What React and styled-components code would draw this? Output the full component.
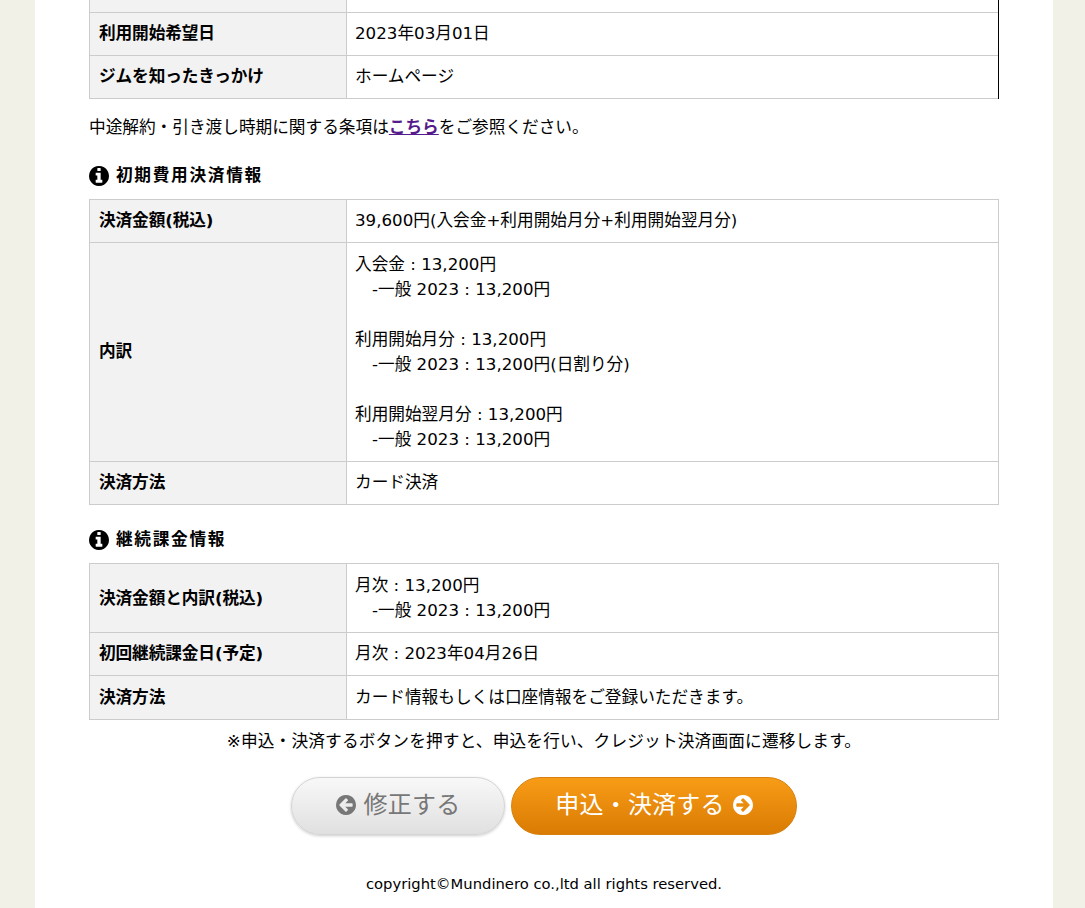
import styled, { createGlobalStyle } from "styled-components";

const GlobalStyle = createGlobalStyle`
  html, body {
    margin: 0;
    padding: 0;
    height: 908px;
    overflow: hidden;
    background: #f1f1e8;
  }
  body {
    font-family: "DejaVu Sans", "Noto Sans CJK JP", sans-serif;
    font-size: 16.67px;
    color: #000;
  }
`;

const Page = styled.div`
  box-sizing: border-box;
  width: 1018px;
  height: 908px;
  margin-left: 35px;
  padding: 0 54px;
  background: #fff;
  overflow: hidden;
`;

const DarkEdge = styled.div`
  position: relative;
  &::after {
    content: "";
    position: absolute;
    top: 0;
    right: 0;
    bottom: 0;
    width: 1px;
    background: #000;
  }
`;

const Table = styled.table`
  width: 910px;
  table-layout: fixed;
  border-collapse: collapse;
  line-height: 25px;
`;

const Th = styled.th`
  width: 257px;
  box-sizing: border-box;
  padding: 8.6px 9px 8.8px;
  background: #f2f2f2;
  border: 1px solid #ccc;
  border-top: ${(p) => (p.$clipped ? "none" : "1px solid #ccc")};
  text-align: left;
  font-weight: 700;
  letter-spacing: -0.1px;
`;

const Td = styled.td`
  padding: 8.6px 9px 8.8px 8px;
  border: 1px solid #ccc;
  border-top: ${(p) => (p.$clipped ? "none" : "1px solid #ccc")};
`;

const ClippedRow = styled.tr`
  height: 12px;
  th, td {
    padding: 0;
  }
`;

const Indent = styled.span`
  padding-left: 17px;
`;

const Notice = styled.p`
  margin: 16px 0 0;
  line-height: 25px;
`;

const TermsLink = styled.a`
  color: #551a8b;
  font-weight: 700;
  text-decoration: underline;
`;

const Heading = styled.h3`
  display: flex;
  align-items: center;
  gap: 7px;
  margin: 22.5px 0 10px;
  font-size: 16.67px;
  line-height: 26px;
  font-weight: 700;
  letter-spacing: 1.7px;
`;

const Glyph = styled.svg`
  flex: none;
  width: ${(p) => p.$size}px;
  height: ${(p) => p.$size}px;
  fill: currentColor;
  transform: ${(p) => (p.$flip ? "scaleX(-1)" : "none")};
`;

const Caution = styled.p`
  margin: 9px 0 0;
  line-height: 25px;
  text-align: center;
  letter-spacing: 0.17px;
`;

const Buttons = styled.div`
  display: flex;
  justify-content: center;
  gap: 6px;
  margin-top: 23px;
`;

const Button = styled.a`
  box-sizing: border-box;
  display: flex;
  align-items: center;
  justify-content: center;
  gap: 8px;
  width: ${(p) => p.$width}px;
  height: 58px;
  padding-bottom: 6px;
  border-radius: 29px;
  font-size: 24px;
  letter-spacing: 0.2px;
  color: ${(p) => (p.$primary ? "#fff" : "#777")};
  border: 1px solid ${(p) => (p.$primary ? "#d6810f" : "#d4d4d4")};
  background: ${(p) =>
    p.$primary
      ? "linear-gradient(#f89c17, #da7b03)"
      : "linear-gradient(#f8f8f8, #e0e0e0)"};
  box-shadow: ${(p) => (p.$primary ? "none" : "0 1px 3px rgba(0, 0, 0, 0.2)")};
  svg {
    margin-top: 5px;
  }
`;

const Copyright = styled.p`
  margin: 37px 0 0;
  line-height: 24px;
  font-size: 14.75px;
  text-align: center;
`;

const InfoIcon = () => (
  <Glyph $size={20} viewBox="128 128 1536 1536">
    <path d="M1152 1376v-160q0-14-9-23t-23-9h-96v-512q0-14-9-23t-23-9h-320q-14 0-23 9t-9 23v160q0 14 9 23t23 9h96v320h-96q-14 0-23 9t-9 23v160q0 14 9 23t23 9h448q14 0 23-9t9-23zm-128-896v-160q0-14-9-23t-23-9h-192q-14 0-23 9t-9 23v160q0 14 9 23t23 9h192q14 0 23-9t9-23zm640 416q0 209-103 385.5t-279.5 279.5-385.5 103-385.5-103-279.5-279.5-103-385.5 103-385.5 279.5-279.5 385.5-103 385.5 103 279.5 279.5 103 385.5z" />
  </Glyph>
);

const ArrowIcon = ({ flip }) => (
  <Glyph $size={20} $flip={flip} viewBox="128 128 1536 1536">
    <path d="M1413 896q0-27-18-45l-91-91-362-362q-18-18-45-18t-45 18l-91 91q-18 18-18 45t18 45l189 189h-502q-26 0-45 19t-19 45v128q0 26 19 45t45 19h502l-189 189q-19 19-19 45t19 45l91 91q18 18 45 18t45-18l362-362 91-91q18-18 18-45zm251 0q0 209-103 385.5t-279.5 279.5-385.5 103-385.5-103-279.5-279.5-103-385.5 103-385.5 279.5-279.5 385.5-103 385.5 103 279.5 279.5 103 385.5z" />
  </Glyph>
);

const App = () => {
  return (
    <>
      <GlobalStyle />
      <Page>
        <DarkEdge>
          <Table>
            <tbody>
              <ClippedRow>
                <Th $clipped />
                <Td $clipped />
              </ClippedRow>
              <tr>
                <Th>利用開始希望日</Th>
                <Td>2023年03月01日</Td>
              </tr>
              <tr>
                <Th>ジムを知ったきっかけ</Th>
                <Td>ホームページ</Td>
              </tr>
            </tbody>
          </Table>
        </DarkEdge>

        <Notice>
          中途解約・引き渡し時期に関する条項は<TermsLink href="#">こちら</TermsLink>をご参照ください。
        </Notice>

        <Heading>
          <InfoIcon />
          初期費用決済情報
        </Heading>
        <Table>
          <tbody>
            <tr>
              <Th>決済金額(税込)</Th>
              <Td>39,600円(入会金+利用開始月分+利用開始翌月分)</Td>
            </tr>
            <tr>
              <Th>内訳</Th>
              <Td>
                入会金 : 13,200円
                <br />
                <Indent>-一般 2023 : 13,200円</Indent>
                <br />
                <br />
                利用開始月分 : 13,200円
                <br />
                <Indent>-一般 2023 : 13,200円(日割り分)</Indent>
                <br />
                <br />
                利用開始翌月分 : 13,200円
                <br />
                <Indent>-一般 2023 : 13,200円</Indent>
              </Td>
            </tr>
            <tr>
              <Th>決済方法</Th>
              <Td>カード決済</Td>
            </tr>
          </tbody>
        </Table>

        <Heading>
          <InfoIcon />
          継続課金情報
        </Heading>
        <Table>
          <tbody>
            <tr>
              <Th>決済金額と内訳(税込)</Th>
              <Td>
                月次 : 13,200円
                <br />
                <Indent>-一般 2023 : 13,200円</Indent>
              </Td>
            </tr>
            <tr>
              <Th>初回継続課金日(予定)</Th>
              <Td>月次 : 2023年04月26日</Td>
            </tr>
            <tr>
              <Th>決済方法</Th>
              <Td>カード情報もしくは口座情報をご登録いただきます。</Td>
            </tr>
          </tbody>
        </Table>

        <Caution>※申込・決済するボタンを押すと、申込を行い、クレジット決済画面に遷移します。</Caution>

        <Buttons>
          <Button $width={214}>
            <ArrowIcon flip />
            修正する
          </Button>
          <Button $primary $width={286}>
            申込・決済する
            <ArrowIcon />
          </Button>
        </Buttons>

        <Copyright>copyright©Mundinero co.,ltd all rights reserved.</Copyright>
      </Page>
    </>
  );
};

export default App;
